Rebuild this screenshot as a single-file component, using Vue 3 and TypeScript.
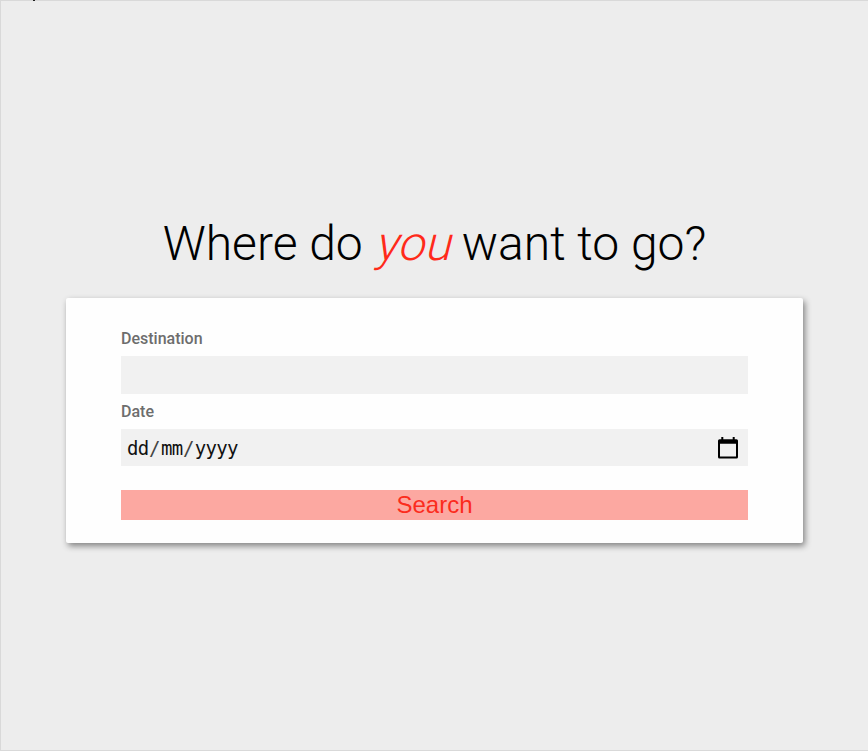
<script setup lang="ts">
import { ref } from 'vue'

const destination = ref('')
const dateParts: string[] = ['dd', '/', 'mm', '/', 'yyyy']
</script>

<template>
  <main class="page">
    <span class="cursor-tip"></span>
    <h1 class="title">Where do <em>you</em> want to go?</h1>
    <form class="card" @submit.prevent>
      <label class="label" for="destination">Destination</label>
      <input id="destination" v-model="destination" class="field" type="text" />
      <span class="label date-label">Date</span>
      <div class="field date-field">
        <span class="date-text">
          <span v-for="(part, i) in dateParts" :key="i" :class="{ slash: part === '/' }">{{ part }}</span>
        </span>
        <svg class="calendar" viewBox="0 0 20 22" width="20" height="22" aria-hidden="true">
          <path
            fill="#000"
            fill-rule="evenodd"
            d="M3.300 0h2v2.300h9.400V0h2v2.300h1.800a1.500 1.500 0 0 1 1.500 1.500v16.200a1.500 1.500 0 0 1-1.500 1.500h-17a1.500 1.500 0 0 1-1.500-1.500V3.800a1.500 1.500 0 0 1 1.500-1.500H3.300zM2 6.700v12.900h16V6.700z"
          />
        </svg>
      </div>
      <button class="search" type="submit">Search</button>
    </form>
  </main>
</template>

<style>
body {
  margin: 0;
}
</style>

<style scoped>
.page {
  position: relative;
  box-sizing: border-box;
  height: 751px;
  padding: 215px 65px 0 65px;
  border: solid #d9d9d9;
  border-width: 1px 0 1px 1px;
  background: #ededed;
  font-family: Roboto, sans-serif;
}
.cursor-tip {
  position: absolute;
  top: -1px;
  left: 32px;
  width: 2px;
  height: 1px;
  background: #222;
}
.title {
  margin: 0;
  height: 82px;
  line-height: 56px;
  font-size: 48px;
  font-weight: 300;
  text-align: center;
  white-space: nowrap;
  color: #000;
}
.title em {
  display: inline-block;
  font-style: normal;
  transform: skewX(-14deg);
  transform-origin: 50% 45px;
  color: #ff2a1a;
}
.card {
  box-sizing: border-box;
  display: flex;
  flex-direction: column;
  width: 737px;
  height: 245.400px;
  padding: 30px 55px 0;
  border-radius: 2px;
  background: #fefefe;
  box-shadow: 2px 3px 6px rgba(0, 0, 0, 0.45);
}
.label {
  height: 28px;
  line-height: 21px;
  font-size: 16px;
  font-weight: 500;
  color: #6d6d6d;
}
.date-label {
  height: 28px;
  margin-top: 7px;
}
.field {
  box-sizing: border-box;
  width: 100%;
  height: 38px;
  flex: none;
  padding: 0 10px 0 6px;
  border: 0;
  outline: 0;
  background: #f1f1f1;
  font: 18px Roboto, sans-serif;
}
.date-field {
  display: flex;
  align-items: center;
  justify-content: space-between;
  height: 37px;
}
.date-text {
  display: flex;
  font: 19px/36px "DejaVu Sans Mono", monospace;
  letter-spacing: -0.650px;
  color: #111;
}
.slash {
  padding: 0 1px 0 0.500px;
  color: #444;
}
.calendar {
  display: block;
}
.search {
  flex: none;
  height: 30px;
  margin-top: 24px;
  padding: 0;
  border: 0;
  background: #fca8a1;
  color: #fb2c1d;
  font: 24px/30px "Liberation Sans", sans-serif;
}
</style>
